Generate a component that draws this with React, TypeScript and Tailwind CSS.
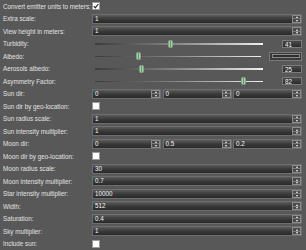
import React from 'react';

const font = { fontFamily: '"Liberation Sans", Arial, sans-serif' };

const Spin = () => (
    <div className="w-[9px] h-full shrink-0 border border-[#8c8c8c] bg-[#4a4a4a] flex flex-col">
        <div className="flex-1 flex items-center justify-center border-b border-[#7a7a7a]">
            <div className="w-0 h-0 border-l-[1.5px] border-r-[1.5px] border-b-[2px] border-l-transparent border-r-transparent border-b-[#f0f0f0]" />
        </div>
        <div className="flex-1 flex items-center justify-center">
            <div className="w-0 h-0 border-l-[1.5px] border-r-[1.5px] border-t-[2px] border-l-transparent border-r-transparent border-t-[#f0f0f0]" />
        </div>
    </div>
);

const NumInput = ({ value, className = '' }: { value: string; className?: string }) => (
    <div className={`h-[10px] flex border border-[#6e6e6e] bg-gradient-to-b from-[#5c5c5c] via-[#3a3a3a] to-[#2a2a2a] ${className}`}>
        <div className="flex-1 pl-[2px] text-[6.3px] leading-[8px] text-[#f2f2f2] overflow-hidden">{value}</div>
        <Spin />
    </div>
);

const Check = ({ checked = false }: { checked?: boolean }) => (
    <div className="w-[8px] h-[8px] bg-white border border-[#9a9a9a] flex items-center justify-center">
        {checked && (
            <svg width="6" height="6" viewBox="0 0 6 6">
                <path d="M0.8 3.2 L2.3 4.8 L5.3 1" stroke="#222" strokeWidth="1.2" fill="none" />
            </svg>
        )}
    </div>
);

const Track = ({ pos, className = '' }: { pos: number; className?: string }) => (
    <div className={`relative h-[8px] flex items-center ${className}`}>
        <div className="w-full h-[1.5px] bg-gradient-to-r from-[#3c3c3c] via-[#8a8a8a] to-[#f0f0f0]" />
        <div
            className="absolute top-0 w-[5px] h-[8px] rounded-[1.5px] border border-[#9a9a9a] bg-gradient-to-r from-[#d0d0d0] via-[#2fbf3a] to-[#d0d0d0]"
            style={{ left: pos }}
        />
    </div>
);

const ValueBox = ({ value }: { value: string }) => (
    <div className="w-[20px] h-[8px] border border-[#7a7a7a] bg-gradient-to-b from-[#4a4a4a] to-[#2c2c2c] pl-[2px] text-[6.3px] leading-[7px] text-[#f2f2f2]">
        {value}
    </div>
);

const Row = ({ label, children }: { label: string; children?: React.ReactNode }) => (
    <div className="h-[12.5px] flex items-center">
        <div className="w-[92px] shrink-0 pl-[3px] text-[6.3px] text-[#e2e2e2] whitespace-nowrap overflow-hidden">{label}</div>
        <div className="flex-1 pr-[4px] flex items-center">{children}</div>
    </div>
);

export default function App() {
    return (
        <div className="w-[306px] h-[250px] bg-[#585858] overflow-hidden" style={font}>
            <Row label="Convert emitter units to meters:">
                <Check checked />
            </Row>
            <Row label="Extra scale:">
                <NumInput value="1" className="flex-1" />
            </Row>
            <Row label="View height in meters:">
                <NumInput value="1" className="flex-1" />
            </Row>
            <Row label="Turbidity:">
                <Track pos={73} className="ml-[3px] w-[168px]" />
                <div className="ml-auto"><ValueBox value="41" /></div>
            </Row>
            <Row label="Albedo:">
                <Track pos={41} className="ml-[3px] w-[166px]" />
                <div className="ml-auto w-[33px] h-[9px] border border-[#7a7a7a] bg-[#3a3a3a] p-[1.5px]">
                    <div className="w-full h-full border border-[#8a8a8a] bg-[#2e2e2e]" />
                </div>
            </Row>
            <Row label="Aerosols albedo:">
                <Track pos={44} className="ml-[3px] w-[168px]" />
                <div className="ml-auto"><ValueBox value="25" /></div>
            </Row>
            <Row label="Asymmetry Factor:">
                <Track pos={146} className="ml-[3px] w-[168px]" />
                <div className="ml-auto"><ValueBox value="82" /></div>
            </Row>
            <Row label="Sun dir:">
                <div className="flex-1 grid grid-cols-3 gap-[1.5px]">
                    <NumInput value="0" />
                    <NumInput value="0" />
                    <NumInput value="0" />
                </div>
            </Row>
            <Row label="Sun dir by geo-location:">
                <Check />
            </Row>
            <Row label="Sun radius scale:">
                <NumInput value="1" className="flex-1" />
            </Row>
            <Row label="Sun intensity multiplier:">
                <NumInput value="1" className="flex-1" />
            </Row>
            <Row label="Moon dir:">
                <div className="flex-1 grid grid-cols-3 gap-[1.5px]">
                    <NumInput value="0" />
                    <NumInput value="0.5" />
                    <NumInput value="0.2" />
                </div>
            </Row>
            <Row label="Moon dir by geo-location:">
                <Check />
            </Row>
            <Row label="Moon radius scale:">
                <NumInput value="30" className="flex-1" />
            </Row>
            <Row label="Moon intensity multiplier:">
                <NumInput value="0.7" className="flex-1" />
            </Row>
            <Row label="Star intensity multiplier:">
                <NumInput value="10000" className="flex-1" />
            </Row>
            <Row label="Width:">
                <NumInput value="512" className="flex-1" />
            </Row>
            <Row label="Saturation:">
                <NumInput value="0.4" className="flex-1" />
            </Row>
            <Row label="Sky multiplier:">
                <NumInput value="1" className="flex-1" />
            </Row>
            <Row label="Include sun:">
                <Check />
            </Row>
        </div>
    );
}
